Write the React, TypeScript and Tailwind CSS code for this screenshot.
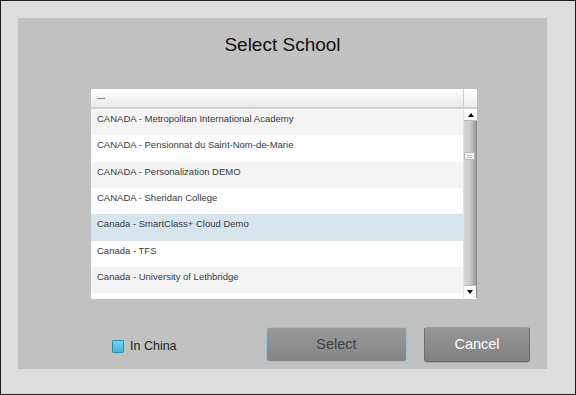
import React from "react";

const rows = [
  "CANADA - Metropolitan International Academy",
  "CANADA - Pensionnat du Saint-Nom-de-Marie",
  "CANADA - Personalization DEMO",
  "CANADA - Sheridan College",
  "Canada - SmartClass+ Cloud Demo",
  "Canada - TFS",
  "Canada - University of Lethbridge",
  "",
];

export default function App() {
  return (
    <div
      className="w-[576px] h-[395px] border border-[#1c1c1c] bg-[#dddddd] pt-[17px] pl-[17px]"
      style={{ fontFamily: '"Liberation Sans", Arial, sans-serif' }}
    >
      <div className="w-[529px] h-[351px] bg-[#c1c1c1] flex flex-col">
        <div className="pt-[16px] h-[38px] text-center text-[19px] leading-[22px] text-[#111]">
          Select School
        </div>
        <div className="ml-[73px] mt-[33px] w-[386px] h-[210px] bg-white flex flex-col">
          <div className="h-[18px] flex bg-gradient-to-b from-white to-[#e9e9e9]">
            <div className="flex-1 pl-[6px] text-[9px] leading-[18px] text-[#444] tracking-[-0.4px]">---</div>
            <div className="w-[14px] border-l border-[#cfcfcf] bg-gradient-to-b from-white to-[#ececec]" />
          </div>
          <div className="h-[2px] bg-[#d2d2d2]" />
          <div className="flex h-[189px]">
            <div className="flex-1 overflow-hidden">
              {rows.map((r, i) => (
                <div
                  key={i}
                  className={
                    "h-[26.33px] pl-[6px] pt-[4px] text-[9.5px] leading-[12px] text-[#3a3a3a] " +
                    (i === 4 ? "bg-[#d6e4eb]" : i % 2 === 0 ? "bg-[#f4f4f4]" : "bg-white")
                  }
                >
                  {r}
                </div>
              ))}
            </div>
            <div className="w-[14px] flex flex-col border-l border-[#e2e2e2]">
              <div className="h-[12px] bg-white flex items-center justify-center border-b border-[#bcbcbc]">
                <div className="w-0 h-0 border-l-[3.5px] border-r-[3.5px] border-b-[4px] border-l-transparent border-r-transparent border-b-black" />
              </div>
              <div className="flex-1 relative bg-gradient-to-r from-[#d6d6d6] via-[#cbcbcb] to-[#9a9a9a] border-r border-[#8a8a8a]">
                <div className="absolute left-0 top-[31px] w-[11px] h-[8px] bg-[#eeeeee] border border-[#b8b8b8] rounded-[1px] flex flex-col justify-center gap-[1px] px-[2px]">
                  <div className="h-px bg-[#c4c4c4]" />
                  <div className="h-px bg-[#c4c4c4]" />
                </div>
              </div>
              <div className="h-[13px] bg-white flex items-center justify-center border-t border-[#bcbcbc] border-r border-r-[#8a8a8a]">
                <div className="w-0 h-0 border-l-[3.5px] border-r-[3.5px] border-t-[4px] border-l-transparent border-r-transparent border-t-black" />
              </div>
            </div>
          </div>
        </div>
        <div className="mt-[28px] flex items-center">
          <div className="w-[248px] pl-[94px] flex items-center mt-[3px]">
            <div className="w-[12px] h-[13px] bg-gradient-to-b from-[#6fd2f0] to-[#49b6dc] border border-[#2f8fb1] rounded-[1px]" />
            <span className="ml-[6px] text-[12.5px] leading-[14px] text-[#1e1e1e]">In China</span>
          </div>
          <button className="w-[141px] h-[35px] rounded-[3px] border border-[#9fc0d2] bg-gradient-to-b from-[#999999] to-[#858585] text-[14.5px] text-[#39424b]">
            Select
          </button>
          <button className="ml-[17px] w-[106px] h-[35px] rounded-[3px] border border-[#6c6c6c] border-t-[#9a9a9a] bg-gradient-to-b from-[#979797] to-[#808080] text-[14.5px] text-white shadow-[0_1px_0_#a8a8a8]">
            Cancel
          </button>
        </div>
      </div>
    </div>
  );
}
